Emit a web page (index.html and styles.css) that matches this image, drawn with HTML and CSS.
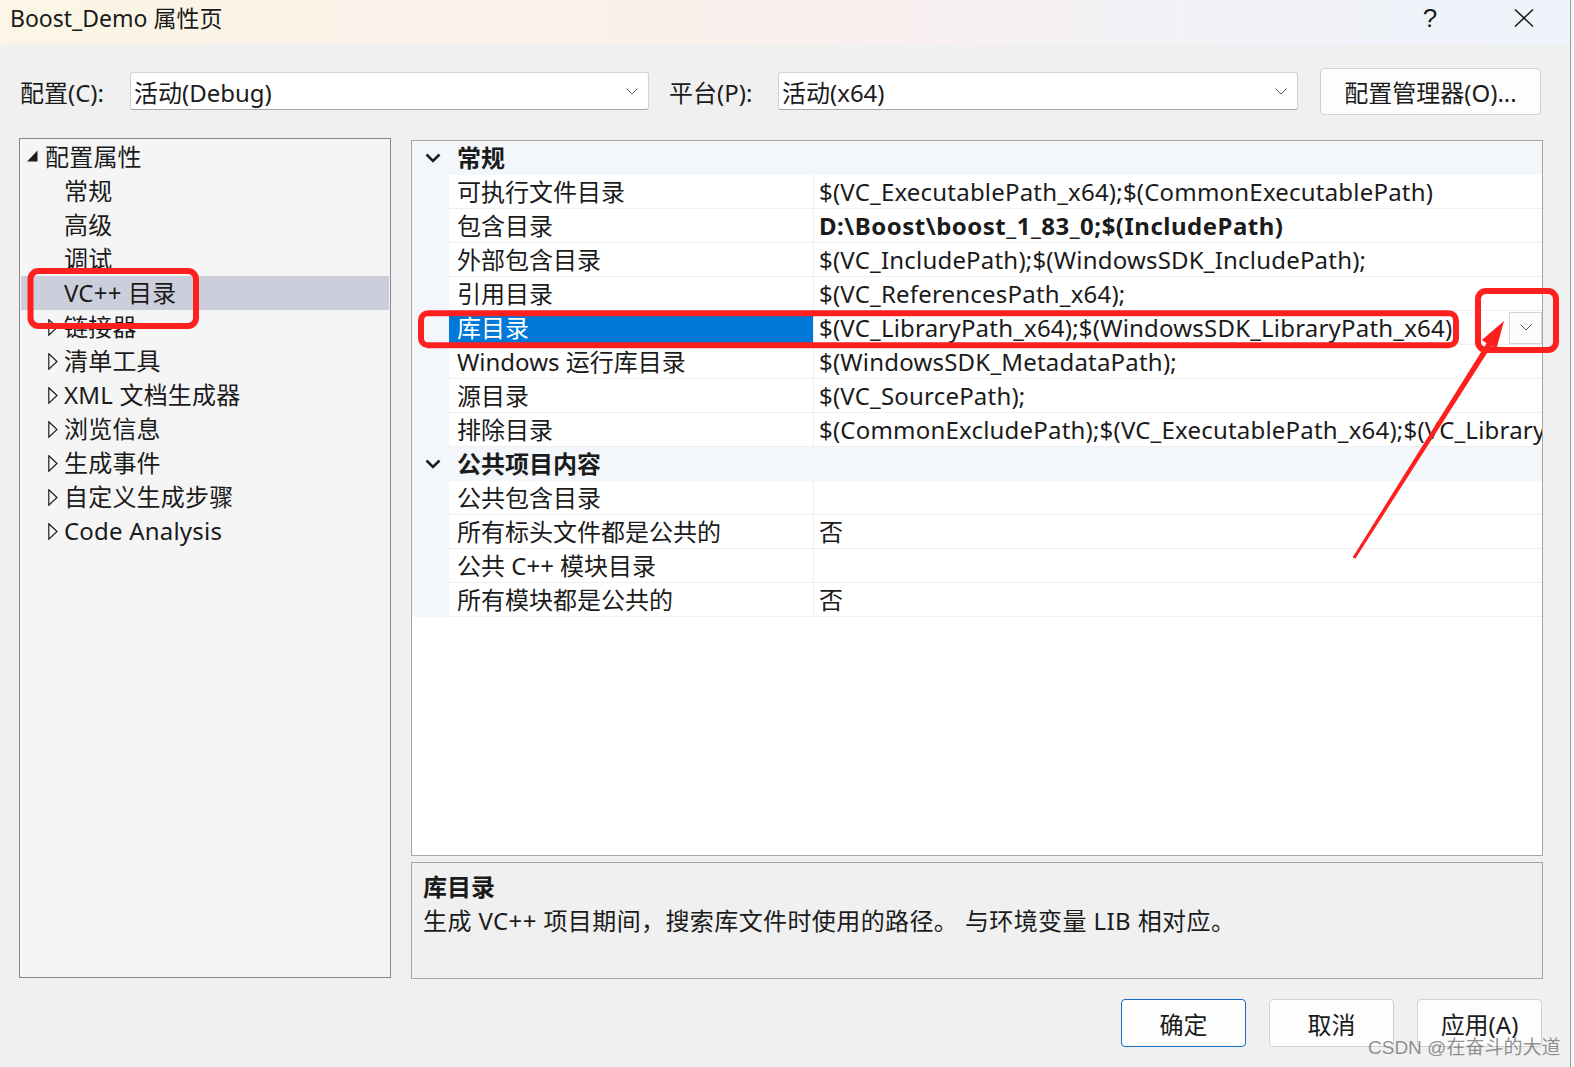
FILE: index.html
```html
<!DOCTYPE html>
<html lang="zh-CN">
<head>
<meta charset="utf-8">
<title>Boost_Demo 属性页</title>
<link rel="stylesheet" href="styles.css">
</head>
<body>
<div class="dialog">
  <header class="titlebar">
    <span class="title">Boost_Demo 属性页</span>
    <span class="tb-help">?</span>
    <span class="tb-close"><svg width="20" height="18" viewBox="0 0 20 18"><path d="M1 0.5 L19 17.5 M19 0.5 L1 17.5" stroke="#1a1a1a" stroke-width="1.5" fill="none"/></svg></span>
  </header>

  <div class="toolbar">
    <span class="tl-label l1">配置(C):</span>
    <div class="combo c1"><span>活动(Debug)</span><svg class="chev" width="12" height="7" viewBox="0 0 12 7"><path d="M0.5 0.5 L6 6 L11.5 0.5" fill="none" stroke="#5a5a5a" stroke-width="1"/></svg></div>
    <span class="tl-label l2">平台(P):</span>
    <div class="combo c2"><span>活动(x64)</span><svg class="chev" width="12" height="7" viewBox="0 0 12 7"><path d="M0.5 0.5 L6 6 L11.5 0.5" fill="none" stroke="#5a5a5a" stroke-width="1"/></svg></div>
    <button class="btn cfg">配置管理器(O)...</button>
  </div>

  <div class="main">
    <div class="tree">
      <div class="tree-row root"><span class="twisty"><svg width="11" height="12" viewBox="0 0 11 12"><path d="M10.5 0.5 L10.5 11.5 L0 11.5 Z" fill="#1e1e1e"/></svg></span><span>配置属性</span></div>
      <div class="tree-row child"><span class="twisty"></span><span>常规</span></div>
      <div class="tree-row child"><span class="twisty"></span><span>高级</span></div>
      <div class="tree-row child"><span class="twisty"></span><span>调试</span></div>
      <div class="tree-row child selected"><span class="twisty"></span><span>VC++ 目录</span></div>
      <div class="tree-row child"><span class="twisty"><svg width="10" height="17" viewBox="0 0 10 17"><path d="M0.8 0.8 L9 8.5 L0.8 16.2 Z" fill="none" stroke="#1e1e1e" stroke-width="1.2"/></svg></span><span>链接器</span></div>
      <div class="tree-row child"><span class="twisty"><svg width="10" height="17" viewBox="0 0 10 17"><path d="M0.8 0.8 L9 8.5 L0.8 16.2 Z" fill="none" stroke="#1e1e1e" stroke-width="1.2"/></svg></span><span>清单工具</span></div>
      <div class="tree-row child"><span class="twisty"><svg width="10" height="17" viewBox="0 0 10 17"><path d="M0.8 0.8 L9 8.5 L0.8 16.2 Z" fill="none" stroke="#1e1e1e" stroke-width="1.2"/></svg></span><span>XML 文档生成器</span></div>
      <div class="tree-row child"><span class="twisty"><svg width="10" height="17" viewBox="0 0 10 17"><path d="M0.8 0.8 L9 8.5 L0.8 16.2 Z" fill="none" stroke="#1e1e1e" stroke-width="1.2"/></svg></span><span>浏览信息</span></div>
      <div class="tree-row child"><span class="twisty"><svg width="10" height="17" viewBox="0 0 10 17"><path d="M0.8 0.8 L9 8.5 L0.8 16.2 Z" fill="none" stroke="#1e1e1e" stroke-width="1.2"/></svg></span><span>生成事件</span></div>
      <div class="tree-row child"><span class="twisty"><svg width="10" height="17" viewBox="0 0 10 17"><path d="M0.8 0.8 L9 8.5 L0.8 16.2 Z" fill="none" stroke="#1e1e1e" stroke-width="1.2"/></svg></span><span>自定义生成步骤</span></div>
      <div class="tree-row child"><span class="twisty"><svg width="10" height="17" viewBox="0 0 10 17"><path d="M0.8 0.8 L9 8.5 L0.8 16.2 Z" fill="none" stroke="#1e1e1e" stroke-width="1.2"/></svg></span><span>Code Analysis</span></div>
    </div>

    <div class="right">
      <div class="grid">
        <div class="cat"><span class="gut"><svg width="16" height="10" viewBox="0 0 16 10"><path d="M1.5 1.5 L8 8 L14.5 1.5" fill="none" stroke="#1e1e1e" stroke-width="2.6"/></svg></span><span class="cat-name">常规</span></div>
        <div class="prop"><span class="gut"></span><span class="pn">可执行文件目录</span><span class="pv">$(VC_ExecutablePath_x64);$(CommonExecutablePath)</span></div>
        <div class="prop"><span class="gut"></span><span class="pn">包含目录</span><span class="pv bold">D:\Boost\boost_1_83_0;$(IncludePath)</span></div>
        <div class="prop"><span class="gut"></span><span class="pn">外部包含目录</span><span class="pv">$(VC_IncludePath);$(WindowsSDK_IncludePath);</span></div>
        <div class="prop"><span class="gut"></span><span class="pn">引用目录</span><span class="pv">$(VC_ReferencesPath_x64);</span></div>
        <div class="prop sel"><span class="gut"></span><span class="pn">库目录</span><span class="pv"><span class="pv-text">$(VC_LibraryPath_x64);$(WindowsSDK_LibraryPath_x64)</span><span class="dd"><svg width="12" height="7" viewBox="0 0 12 7"><path d="M0.5 0.5 L6 6 L11.5 0.5" fill="none" stroke="#5a5a5a" stroke-width="1"/></svg></span></span></div>
        <div class="prop"><span class="gut"></span><span class="pn">Windows 运行库目录</span><span class="pv">$(WindowsSDK_MetadataPath);</span></div>
        <div class="prop"><span class="gut"></span><span class="pn">源目录</span><span class="pv">$(VC_SourcePath);</span></div>
        <div class="prop"><span class="gut"></span><span class="pn">排除目录</span><span class="pv">$(CommonExcludePath);$(VC_ExecutablePath_x64);$(VC_LibraryPath_x64);$(WindowsSDK_LibraryPath_x64)</span></div>
        <div class="cat"><span class="gut"><svg width="16" height="10" viewBox="0 0 16 10"><path d="M1.5 1.5 L8 8 L14.5 1.5" fill="none" stroke="#1e1e1e" stroke-width="2.6"/></svg></span><span class="cat-name">公共项目内容</span></div>
        <div class="prop"><span class="gut"></span><span class="pn">公共包含目录</span><span class="pv"></span></div>
        <div class="prop"><span class="gut"></span><span class="pn">所有标头文件都是公共的</span><span class="pv">否</span></div>
        <div class="prop"><span class="gut"></span><span class="pn">公共 C++ 模块目录</span><span class="pv"></span></div>
        <div class="prop"><span class="gut"></span><span class="pn">所有模块都是公共的</span><span class="pv">否</span></div>
      </div>
      <div class="desc">
        <div class="desc-title">库目录</div>
        <div class="desc-text">生成 VC++ 项目期间，搜索库文件时使用的路径。 与环境变量 LIB 相对应。</div>
      </div>
    </div>
  </div>

  <div class="footer">
    <button class="btn foot default">确定</button>
    <button class="btn foot">取消</button>
    <button class="btn foot">应用(A)</button>
  </div>
</div>

<div class="watermark">CSDN @在奋斗的大道</div>

<svg class="marks" width="1574" height="1067" viewBox="0 0 1574 1067">
  <rect x="30.5" y="271" width="165.5" height="55" rx="8" fill="none" stroke="#fe1f1f" stroke-width="6"/>
  <rect x="421" y="313.3" width="1035" height="32" rx="7" fill="none" stroke="#fe1f1f" stroke-width="6"/>
  <rect x="1478" y="291" width="78" height="59" rx="8" fill="none" stroke="#fe1f1f" stroke-width="6"/>
  <polygon points="1352.7,557.2 1486.6,343.2 1481.8,340.1 1504,321 1496.3,349.3 1491.4,346.2 1355.3,558.8" fill="#fe1f1f"/>
</svg>
</body>
</html>
```

FILE: styles.css
```css
html, body {
  margin: 0;
  padding: 0;
}

body {
  width: 1574px;
  height: 1067px;
  background: #f4f4f4;
  font-family: "Noto Sans", "Noto Sans CJK SC", sans-serif;
  font-size: 24px;
  color: #1b1b1b;
  position: relative;
  overflow: hidden;
}

.dialog {
  width: 1570px;
  height: 1067px;
  background: #f0f0f0;
  border-right: 1px solid #9c9c9c;
  display: flex;
  flex-direction: column;
}

/* title bar */
.titlebar {
  height: 44px;
  flex: none;
  box-sizing: border-box;
  display: flex;
  align-items: center;
  padding: 0 36px 9px 10px;
  background: linear-gradient(90deg, #fbf6e5 0%, #faf2ea 30%, #f9efee 55%, #f2f2f7 75%, #eef3fa 100%);
}

.title {
  flex: 1;
  font-size: 23px;
  line-height: 30px;
  color: #1a1a1a;
}

.tb-help {
  width: 20px;
  text-align: center;
  font-family: "Liberation Sans", sans-serif;
  font-size: 26px;
  line-height: 30px;
  margin-right: 74px;
  color: #1a1a1a;
}

.tb-close {
  width: 20px;
  height: 18px;
  display: flex;
}

/* toolbar */
.toolbar {
  height: 94px;
  flex: none;
  box-sizing: border-box;
  display: flex;
  align-items: center;
  padding-left: 20px;
}

.tl-label {
  flex: none;
  white-space: nowrap;
}

.l1 { width: 110px; }
.l2 { width: 109px; }

.combo {
  flex: none;
  height: 38px;
  box-sizing: border-box;
  background: #ffffff;
  border: 1px solid #d2d2d2;
  border-bottom-color: #a8a8a8;
  border-radius: 3px;
  display: flex;
  align-items: center;
  justify-content: space-between;
  padding: 0 10px 0 3px;
}

.c1 { width: 519px; margin-right: 20px; }
.c2 { width: 520px; margin-right: 22px; }

.btn {
  font: inherit;
  color: #1b1b1b;
  background: #fdfdfd;
  border: 1px solid #d0d0d0;
  border-radius: 4px;
  padding: 0;
  box-sizing: border-box;
}

.cfg {
  flex: none;
  width: 221px;
  height: 47px;
}

/* main */
.main {
  height: 840px;
  flex: none;
  display: flex;
  gap: 20px;
  padding-left: 19px;
}

.tree {
  width: 372px;
  height: 840px;
  box-sizing: border-box;
  border: 1px solid #868a90;
  background: #f5f5f5;
  padding-top: 1px;
}

.tree-row {
  height: 34px;
  display: flex;
  align-items: center;
  white-space: nowrap;
  line-height: 34px;
  letter-spacing: 0.2px;
}

.tree-row.root { padding-left: 7px; }
.tree-row.root .twisty { width: 18px; }

.tree-row.child { padding-left: 28px; }
.tree-row.child .twisty { width: 16px; }

.twisty {
  flex: none;
  display: flex;
  align-items: center;
  height: 34px;
}

.tree-row.root .twisty svg { margin-top: -3px; }

.tree-row.selected {
  background: #cccedb;
  margin: 0 1px;
  padding-left: 27px;
}

.right {
  width: 1132px;
  margin-top: 2px;
  display: flex;
  flex-direction: column;
  gap: 6px;
}

.grid {
  height: 716px;
  flex: none;
  box-sizing: border-box;
  border: 1px solid #a6a6a6;
  background: #ffffff;
  overflow: hidden;
}

.cat {
  height: 34px;
  display: flex;
  align-items: center;
  background: #f3f6fa;
}

.cat .gut {
  width: 37px;
  height: 34px;
  flex: none;
  display: flex;
  align-items: center;
  padding-left: 13px;
  box-sizing: border-box;
}

.cat-name {
  font-weight: bold;
  padding-left: 8px;
  line-height: 34px;
}

.prop {
  height: 34px;
  display: grid;
  grid-template-columns: 37px 365px 1fr;
  line-height: 33px;
}

.prop .gut {
  background: #f3f6fa;
}

.pn {
  box-sizing: border-box;
  padding-left: 8px;
  border-right: 1px solid #efefef;
  border-bottom: 1px solid #efefef;
  white-space: nowrap;
  overflow: hidden;
}

.pv {
  box-sizing: border-box;
  padding-left: 5px;
  border-bottom: 1px solid #efefef;
  white-space: nowrap;
  overflow: hidden;
  letter-spacing: 0.2px;
}

.pv.bold {
  font-weight: bold;
  letter-spacing: 0.5px;
}

.prop.sel .pn {
  background: #0078d7;
  color: #ffffff;
}

.prop.sel .pv {
  display: flex;
  align-items: center;
}

.dd {
  margin-left: auto;
  margin-right: 0;
  width: 33px;
  height: 32px;
  box-sizing: border-box;
  border: 1px solid #d6d6d6;
  background: #fcfcfc;
  display: flex;
  align-items: center;
  justify-content: center;
}

.desc {
  height: 117px;
  flex: none;
  box-sizing: border-box;
  border: 1px solid #a6a6a6;
  background: #f0f0f0;
  padding: 7px 11px 0;
  line-height: 34px;
}

.desc-title {
  font-weight: bold;
}

.desc-text {
  letter-spacing: 0.4px;
}

/* footer */
.footer {
  display: flex;
  justify-content: flex-end;
  gap: 23px;
  padding-top: 21px;
  padding-right: 28px;
}

.foot {
  width: 125px;
  height: 48px;
}

.foot.default {
  border-color: #1a6ac4;
}

/* overlays */
.watermark {
  position: absolute;
  left: 1368px;
  top: 1034px;
  font-family: "Liberation Sans", "Noto Sans CJK SC", sans-serif;
  font-size: 19px;
  line-height: 28px;
  color: rgba(110, 110, 110, 0.75);
  white-space: nowrap;
}

.marks {
  position: absolute;
  left: 0;
  top: 0;
  pointer-events: none;
}
```
